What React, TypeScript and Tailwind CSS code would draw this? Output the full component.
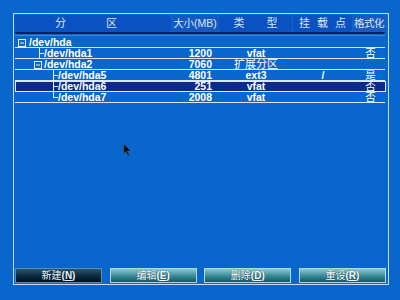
import React from "react";

const font = { fontFamily: '"Liberation Sans", "Noto Sans CJK SC", sans-serif' };

function Box() {
  return (
    <svg width="8" height="8" viewBox="0 0 8 8" className="shrink-0">
      <rect x="0.5" y="0.5" width="7" height="7" fill="none" stroke="#e8f0ff" strokeWidth="1" />
      <line x1="2" y1="4" x2="6" y2="4" stroke="#e8f0ff" strokeWidth="1" />
    </svg>
  );
}

function Tee({ last }: { last?: boolean }) {
  return (
    <svg width="5" height="11" viewBox="0 0 5 11" className="shrink-0">
      <line x1="0.5" y1="0" x2="0.5" y2={last ? 6 : 11} stroke="#e8f0ff" strokeWidth="1" />
      <line x1="0.5" y1="5.5" x2="5" y2="5.5" stroke="#e8f0ff" strokeWidth="1" />
    </svg>
  );
}

type Row = {
  name: string;
  kind: "root" | "child" | "ext" | "logical";
  last?: boolean;
  size?: string;
  type?: string;
  mount?: string;
  fmt?: string;
  sel?: boolean;
};

const rows: Row[] = [
  { name: "/dev/hda", kind: "root" },
  { name: "/dev/hda1", kind: "child", size: "1200", type: "vfat", fmt: "否" },
  { name: "/dev/hda2", kind: "ext", size: "7060", type: "扩展分区" },
  { name: "/dev/hda5", kind: "logical", size: "4801", type: "ext3", mount: "/", fmt: "是" },
  { name: "/dev/hda6", kind: "logical", size: "251", type: "vfat", fmt: "否", sel: true },
  { name: "/dev/hda7", kind: "logical", last: true, size: "2008", type: "vfat", fmt: "否" },
];

function NameCell({ r }: { r: Row }) {
  if (r.kind === "root")
    return (
      <div className="flex items-center pl-[3px] gap-[3px] h-full">
        <Box />
        <span>{r.name}</span>
      </div>
    );
  if (r.kind === "child")
    return (
      <div className="flex items-center pl-[24px] h-full">
        <Tee />
        <span>{r.name}</span>
      </div>
    );
  if (r.kind === "ext")
    return (
      <div className="flex items-center pl-[19px] gap-[2px] h-full">
        <Box />
        <span>{r.name}</span>
      </div>
    );
  return (
    <div className="flex items-center pl-[38px] h-full">
      <Tee last={r.last} />
      <span>{r.name}</span>
    </div>
  );
}

function Btn({ label, k, active }: { label: string; k: string; active?: boolean }) {
  return (
    <div
      className={
        "w-[87px] h-[15px] flex items-center justify-center text-[10px] leading-none border whitespace-nowrap " +
        (active
          ? "bg-gradient-to-b from-[#2c5870] via-[#0c2c44] to-[#02101c] border-[#5c8cb0] text-[#e8f0f8]"
          : "bg-gradient-to-b from-[#8cccd0] via-[#3c8e9a] to-[#1a5666] border-[#b0d8dc] text-white")
      }
      style={{ textShadow: "0 0 1px #00202c" }}
    >
      <span>
        {label}
        <span className="font-bold">
          (<span className="underline">{k}</span>)
        </span>
      </span>
    </div>
  );
}

const cell = "h-[11px] flex items-center overflow-hidden whitespace-nowrap";

export default function App() {
  return (
    <div className="w-[400px] h-[300px] bg-[#0866cc] relative overflow-hidden pt-[13px] pl-[13px]" style={font}>
      <div className="w-[376px] h-[272px] border border-[#c8daf4] flex flex-col px-[1px] pt-[1px] pb-[1px]">
        {/* header */}
        <div className="grid grid-cols-[157px_47px_74px_60px_32px] h-[17px] text-[11px] leading-none text-[#dce6f8] whitespace-nowrap overflow-hidden">
          <div className="h-[17px] mr-[1px] bg-[#0a52c2] rounded-[3px] flex items-center pl-[40px] gap-[40px]">
            <span>分</span>
            <span>区</span>
          </div>
          <div className="h-[17px] mr-[1px] bg-[#1458c2] rounded-[3px] flex items-center justify-center text-[10.5px]">
            大小(MB)
          </div>
          <div className="h-[17px] mr-[1px] bg-[#0a52c2] rounded-[3px] flex items-center justify-center gap-[22px]">
            <span>类</span>
            <span>型</span>
          </div>
          <div className="h-[17px] mr-[1px] bg-[#0a52c2] rounded-[3px] flex items-center justify-center gap-[7px]">
            <span>挂</span>
            <span>载</span>
            <span>点</span>
          </div>
          <div className="h-[17px] bg-[#1a5ac0] rounded-[3px] flex items-center justify-center text-[10.5px] tracking-[-0.5px]">
            格式化
          </div>
        </div>
        <div className="h-[2px] w-[370px] bg-[#04205c] rounded-b-[2px] shrink-0" />
        <div className="h-[1px] w-[370px] mt-[1px] bg-[#3c88dc] shrink-0" />
        {/* rows */}
        <div className="mt-[1px] flex flex-col text-[10.5px] leading-none font-bold text-white">
          {rows.map((r, i) => (
            <div
              key={i}
              className={
                "grid grid-cols-[157px_47px_74px_60px_32px] h-[11px] box-border overflow-hidden " +
                (r.sel
                  ? "bg-[#0c2a8c] outline outline-1 outline-[#e0ecff] w-[371px] -outline-offset-1"
                  : "border-b border-[#d8e6fc] w-[370px]")
              }
            >
              <div className={cell}>
                <NameCell r={r} />
              </div>
              <div className={cell + " justify-end pr-[7px]"}>{r.size ?? ""}</div>
              <div className={cell + " justify-center" + (r.kind === "ext" ? " font-normal text-[11px]" : "")}>
                {r.type ?? ""}
              </div>
              <div className={cell + " justify-center"}>{r.mount ?? ""}</div>
              <div className={cell + " justify-center pl-[3px] font-normal"}>{r.fmt ?? ""}</div>
            </div>
          ))}
        </div>
        <div className="flex-1" />
        {/* buttons */}
        <div className="flex justify-between w-[372px] pr-[1px]">
          <Btn label="新建" k="N" active />
          <Btn label="编辑" k="E" />
          <Btn label="删除" k="D" />
          <Btn label="重设" k="R" />
        </div>
      </div>
      {/* mouse cursor */}
      <svg className="absolute left-[123px] top-[143px]" width="10" height="14" viewBox="0 0 10 14">
        <path d="M0.5 0.5 L0.5 11 L3 8.5 L5 13 L6.5 12.3 L4.6 8 L8 8 Z" fill="#101010" stroke="#3a6ab0" strokeWidth="0.6" />
      </svg>
    </div>
  );
}
